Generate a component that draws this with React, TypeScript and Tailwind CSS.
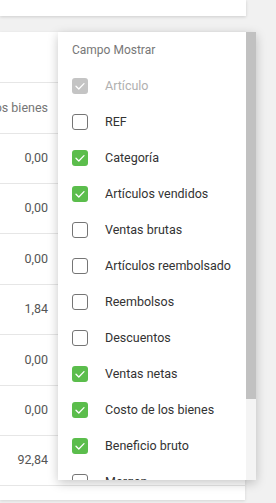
import React from "react";

type Field = { label: string; checked: boolean; disabled?: boolean };

const fields: Field[] = [
	{ label: "Artículo", checked: true, disabled: true },
	{ label: "REF", checked: false },
	{ label: "Categoría", checked: true },
	{ label: "Artículos vendidos", checked: true },
	{ label: "Ventas brutas", checked: false },
	{ label: "Artículos reembolsado", checked: false },
	{ label: "Reembolsos", checked: false },
	{ label: "Descuentos", checked: false },
	{ label: "Ventas netas", checked: true },
	{ label: "Costo de los bienes", checked: true },
	{ label: "Beneficio bruto", checked: true },
	{ label: "Margen", checked: false },
];

// row heights alternate a bit to land on the reference lines
const rows = [
	{ value: "0,00", h: "h-[50px]" },
	{ value: "0,00", h: "h-[50px]" },
	{ value: "0,00", h: "h-[51px]" },
	{ value: "1,84", h: "h-[50px]" },
	{ value: "0,00", h: "h-[51px]" },
	{ value: "0,00", h: "h-[50px]" },
	{ value: "92,84", h: "h-[50px]" },
];

const Checkbox = ({ checked, disabled }: { checked: boolean; disabled?: boolean }) => {
	if (!checked) {
		return <span className="block w-4 h-4 rounded-[3px] border border-[#757575] bg-white shrink-0" />;
	}
	return (
		<span
			className={`flex items-center justify-center w-4 h-4 rounded-[3px] shrink-0 ${
				disabled ? "bg-[#c4c4c4]" : "bg-[#5bbd4c]"
			}`}
		>
			<svg width="16" height="16" viewBox="0 0 16 16" fill="none">
				<polyline
					points="4 8.2 6.8 11 12 5.6"
					stroke="white"
					strokeWidth="1.3"
					strokeLinecap="round"
					strokeLinejoin="round"
				/>
			</svg>
		</span>
	);
};

const App = () => {
	return (
		<div
			className="relative w-[276px] h-[503px] overflow-hidden bg-[#f1f1f1]"
			style={{ fontFamily: "Roboto, 'Liberation Sans', sans-serif" }}
		>
			{/* top card */}
			<div className="w-[246px] h-[16px] bg-white shadow-[0_1px_3px_rgba(0,0,0,0.15)]" />

			{/* table card */}
			<div className="mt-[16px] w-[245px] h-[468px] bg-white shadow-[0_1px_3px_rgba(0,0,0,0.12)]">
				<div className="h-[51px] border-b border-[#e6e6e6]" />
				<div className="h-[51px] border-b border-[#e6e6e6] flex items-center">
					<div className="w-[48px] flex justify-end whitespace-nowrap text-[12.5px] text-[#757575]">
						Costo de los bienes
					</div>
				</div>
				{rows.map((r, i) => (
					<div key={i} className={`${r.h} border-b border-[#e6e6e6] flex items-center`}>
						<div className="w-[48px] flex justify-end whitespace-nowrap text-[12.5px] text-[#555]">
							{r.value}
						</div>
					</div>
				))}
			</div>

			{/* column picker dropdown */}
			<div className="absolute left-[58px] top-[32px] w-[198px] h-[448px] bg-white flex shadow-[0_3px_10px_rgba(0,0,0,0.22)]">
				<div className="flex-1 overflow-hidden">
					<div className="h-[36px] flex items-center pl-[14px] text-[12px] text-[#777]">Campo Mostrar</div>
					{fields.map((f) => (
						<div key={f.label} className="h-[36px] flex items-center pl-[14px]">
							<Checkbox checked={f.checked} disabled={f.disabled} />
							<span
								className={`ml-[17px] text-[12.5px] whitespace-nowrap ${
									f.disabled ? "text-[#b0b0b0]" : "text-[#333]"
								}`}
							>
								{f.label}
							</span>
						</div>
					))}
				</div>
				<div className="w-[10px] h-full bg-[#f4f4f4]">
					<div className="h-[367px] bg-[#c1c1c1]" />
				</div>
			</div>
		</div>
	);
};

export default App;
